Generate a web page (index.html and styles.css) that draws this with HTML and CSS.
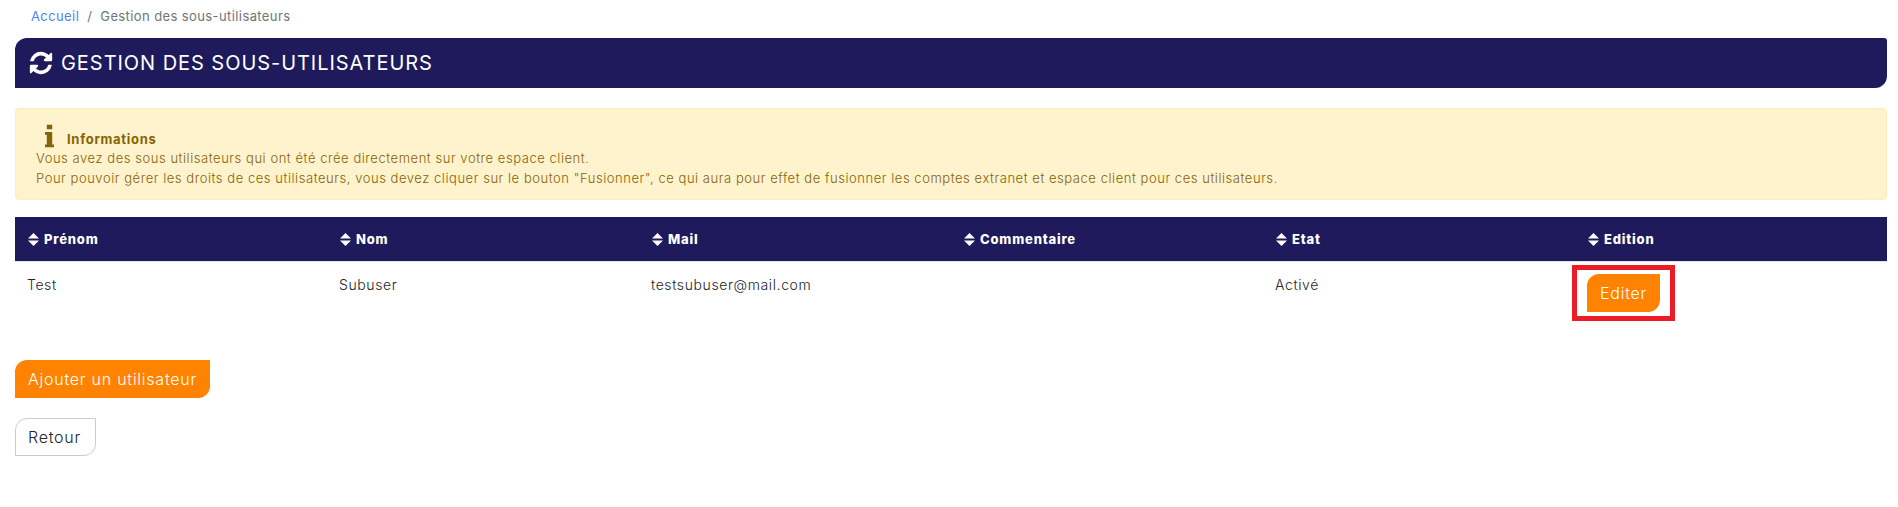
FILE: index.html
```html
<!DOCTYPE html>
<html lang="fr">

<head>
    <meta charset="UTF-8">
    <meta name="viewport" content="width=device-width, initial-scale=1.0">
    <title>Gestion des sous-utilisateurs</title>
    <link rel="stylesheet" href="styles.css">
</head>

<body>
    <ol class="breadcrumb">
        <li><a href="#">Accueil</a></li>
        <li class="sep">/</li>
        <li>Gestion des sous-utilisateurs</li>
    </ol>

    <h1 class="page-title">
        <svg class="icon-refresh" viewBox="0 0 1792 1792">
            <path d="M1639 1056q0 5-1 7-64 268-268 434.5t-478 166.5q-146 0-282.5-55t-243.5-157l-129 129q-19 19-45 19t-45-19-19-45v-448q0-26 19-45t45-19h448q26 0 45 19t19 45-19 45l-137 137q71 66 161 102t187 36q134 0 250-65t186-179q11-17 53-117 8-23 30-23h192q13 0 22.5 9.5t9.5 22.5zm25-800v448q0 26-19 45t-45 19h-448q-26 0-45-19t-19-45 19-45l138-138q-148-137-349-137-134 0-250 65t-186 179q-11 17-53 117-8 23-30 23h-199q-13 0-22.5-9.5t-9.5-22.5v-7q65-268 270-434.5t480-166.5q146 0 284 55.5t245 156.5l130-129q19-19 45-19t45 19 19 45z" />
        </svg>
        <span>GESTION DES SOUS-UTILISATEURS</span>
    </h1>

    <div class="alert">
        <div class="alert-title">
            <svg class="icon-info" viewBox="0 0 10 25">
                <path d="M2 0h6v5H2zM0 8h8v14h2v3H0v-3h2V11H0z" />
            </svg>
            <strong>Informations</strong>
        </div>
        <p>Vous avez des sous utilisateurs qui ont été crée directement sur votre espace client.</p>
        <p>Pour pouvoir gérer les droits de ces utilisateurs, vous devez cliquer sur le bouton "Fusionner", ce qui aura pour effet de fusionner les comptes extranet et espace client pour ces utilisateurs.</p>
    </div>

    <table class="users">
        <thead>
            <tr>
                <th><svg class="icon-sort" viewBox="0 0 11 13"><path d="M5.5 0L11 5.5H0zM0 7.500h11L5.500 13z" /></svg>Prénom</th>
                <th><svg class="icon-sort" viewBox="0 0 11 13"><path d="M5.5 0L11 5.5H0zM0 7.500h11L5.500 13z" /></svg>Nom</th>
                <th><svg class="icon-sort" viewBox="0 0 11 13"><path d="M5.5 0L11 5.5H0zM0 7.500h11L5.500 13z" /></svg>Mail</th>
                <th><svg class="icon-sort" viewBox="0 0 11 13"><path d="M5.5 0L11 5.5H0zM0 7.500h11L5.500 13z" /></svg>Commentaire</th>
                <th><svg class="icon-sort" viewBox="0 0 11 13"><path d="M5.5 0L11 5.5H0zM0 7.500h11L5.500 13z" /></svg>Etat</th>
                <th><svg class="icon-sort" viewBox="0 0 11 13"><path d="M5.5 0L11 5.5H0zM0 7.500h11L5.500 13z" /></svg>Edition</th>
            </tr>
        </thead>
        <tbody>
            <tr>
                <td>Test</td>
                <td>Subuser</td>
                <td>testsubuser@mail.com</td>
                <td></td>
                <td>Activé</td>
                <td>
                    <span class="marked">
                        <a class="btn btn-orange" href="#">Editer</a>
                        <span class="marker"></span>
                    </span>
                </td>
            </tr>
        </tbody>
    </table>

    <div class="actions">
        <a class="btn btn-orange" href="#">Ajouter un utilisateur</a>
        <a class="btn btn-white" href="#">Retour</a>
    </div>
</body>

</html>
```

FILE: styles.css
```css
* {
    padding: 0;
    margin: 0;
    box-sizing: border-box;
}

body {
    padding: 0 11px 0 15px;
    font-family: Inter, "Noto Sans", sans-serif;
    font-size: 13px;
    line-height: 20px;
    color: #212529;
    background-color: white;
}

a {
    text-decoration: none;
}

.breadcrumb {
    display: flex;
    gap: 8px;
    height: 38px;
    padding: 6px 0 0 16px;
    list-style: none;
    font-size: 13px;
    letter-spacing: 0.4px;
    color: #6c757d;
}

.breadcrumb a {
    color: #4a86f0;
}

.page-title {
    display: flex;
    align-items: center;
    gap: 7px;
    height: 50px;
    padding-left: 13px;
    font-size: 20px;
    font-weight: 400;
    letter-spacing: 0.95px;
    color: white;
    background-color: #1e1a5c;
    border-radius: 12px 3px 12px 0;
}

.icon-refresh {
    width: 26px;
    height: 26px;
    fill: white;
}

.alert {
    height: 92px;
    margin-top: 20px;
    padding: 12px 20px 0;
    font-size: 13px;
    font-weight: 300;
    letter-spacing: 0.55px;
    color: #856404;
    background-color: #fff3cd;
    border: 1px solid #ffeeba;
    border-radius: 4px;
}

.alert-title {
    display: flex;
    align-items: flex-end;
    gap: 13px;
    height: 27px;
    padding-left: 9px;
}

.alert-title strong {
    font-weight: 700;
    line-height: 18px;
    letter-spacing: 0.7px;
}

.icon-info {
    width: 9px;
    height: 24px;
    fill: #856404;
}

.users {
    width: 100%;
    margin-top: 17px;
    border-collapse: collapse;
    table-layout: fixed;
}

.users th {
    height: 44px;
    padding: 0 12px;
    font-size: 13px;
    font-weight: 800;
    text-align: left;
    letter-spacing: 0.8px;
    color: white;
    background-color: #1e1a5c;
}

.users td {
    padding: 12px;
    font-size: 14px;
    font-weight: 300;
    line-height: 21px;
    letter-spacing: 0.6px;
    vertical-align: top;
    border-top: 1px solid #dee2e6;
}

.icon-sort {
    width: 11px;
    height: 13px;
    margin: 0 5px 0 1px;
    vertical-align: -2px;
    fill: white;
}

.btn {
    display: block;
    width: fit-content;
    height: 38px;
    padding: 0 12px;
    font-size: 16px;
    font-weight: 300;
    line-height: 36px;
    letter-spacing: 0.75px;
    border: 1px solid transparent;
    border-radius: 12px 0 12px 0;
}

.btn-orange {
    color: white;
    background-color: #ff8200;
}

.btn-white {
    padding: 0 14px 0 12px;
    color: #212529;
    background-color: white;
    border-color: #ccc;
}

/* le cadre rouge posé sur la capture */
.marked {
    display: block;
    position: relative;
    width: fit-content;
}

.marker {
    position: absolute;
    top: -9px;
    right: -15px;
    bottom: -9px;
    left: -15px;
    border: 5px solid #ed1c24;
}

.actions {
    display: flex;
    flex-direction: column;
    gap: 20px;
    margin-top: 36px;
}
```
